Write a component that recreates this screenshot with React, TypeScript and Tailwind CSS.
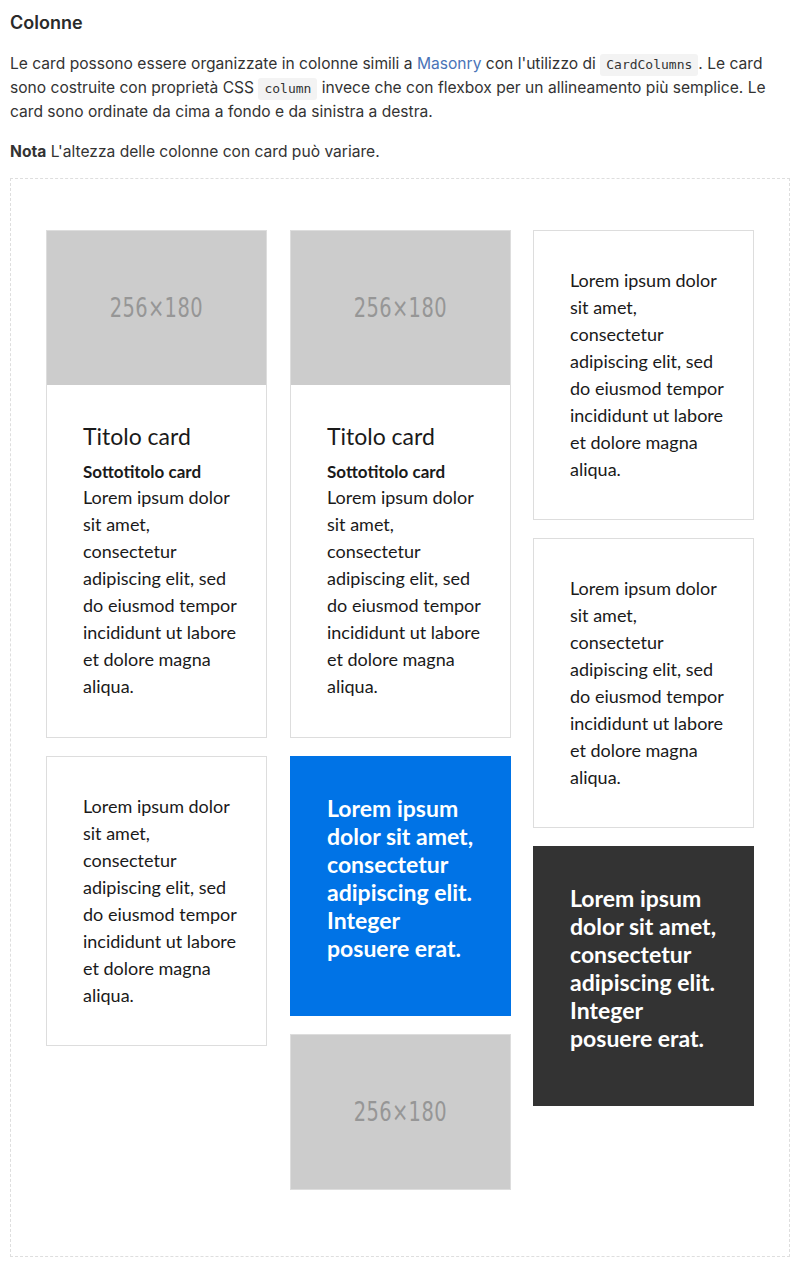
import React from "react";

const cardFont = { fontFamily: "Lato, 'Open Sans', sans-serif" };
const monoFont = { fontFamily: "'DejaVu Sans Mono', monospace" };

const loremLines = [
  "Lorem ipsum dolor",
  "sit amet,",
  "consectetur",
  "adipiscing elit, sed",
  "do eiusmod tempor",
  "incididunt ut labore",
  "et dolore magna",
  "aliqua.",
];

const quoteLines = [
  "Lorem ipsum",
  "dolor sit amet,",
  "consectetur",
  "adipiscing elit.",
  "Integer",
  "posuere erat.",
];

const Placeholder = () => (
  <div className="h-[154px] bg-[#cccccc] flex items-center justify-center">
    <span
      className="text-[27px] text-[#969696] tracking-[0.5px] scale-x-[0.8]"
      style={{ fontFamily: "'DejaVu Sans Condensed', 'Liberation Sans Narrow', sans-serif" }}
    >
      256×180
    </span>
  </div>
);

const Lines = ({ lines }: { lines: string[] }) => (
  <p className="whitespace-nowrap">
    {lines.map((l, i) => (
      <span key={i} className="block">
        {l}
      </span>
    ))}
  </p>
);

const TextCard = () => (
  <div className="border border-[#dddddd] bg-white px-[36px] py-[36px] text-[18px] leading-[27px] text-[#1a1a1a]">
    <Lines lines={loremLines} />
  </div>
);

const ImageCard = () => (
  <div className="border border-[#dddddd] bg-white text-[#1a1a1a]">
    <Placeholder />
    <div className="px-[36px] pt-[36px] pb-[37px]">
      <h5 className="text-[23px] leading-[30px] mb-[9px]">Titolo card</h5>
      <h6 className="text-[17px] leading-[24px] font-bold">Sottotitolo card</h6>
      <div className="text-[18px] leading-[27px]">
        <Lines lines={loremLines} />
      </div>
    </div>
  </div>
);

const QuoteCard = ({ bg }: { bg: string }) => (
  <div className={`${bg} pl-[37px] pr-[20px] pt-[38px] pb-[54px] text-white text-[23px] leading-[28px] font-bold`}>
    <Lines lines={quoteLines} />
  </div>
);

const Code = ({ children }: { children: React.ReactNode }) => (
  <code
    className="inline-block bg-[#f3f3f3] rounded-[3px] px-[6px] py-[2px] text-[13px] leading-[18px] text-[#333333]"
    style={monoFont}
  >
    {children}
  </code>
);

export default function App() {
  return (
    <div className="bg-white min-h-[1285px] px-[10px] pt-[9px] text-[#333333]" style={{ fontFamily: "Inter, 'Liberation Sans', sans-serif" }}>
      <h3 className="text-[18px] leading-[28px] font-semibold text-[#2a2a2a]">Colonne</h3>
      <p className="mt-[15px] text-[15.6px] leading-[24px]">
        Le card possono essere organizzate in colonne simili a{" "}
        <a className="text-[#4a74b8]">Masonry</a> con l'utilizzo di <Code>CardColumns</Code>. Le card sono costruite con
        proprietà CSS <Code>column</Code> invece che con flexbox per un allineamento più semplice. Le card sono ordinate da
        cima a fondo e da sinistra a destra.
      </p>
      <p className="mt-[16px] text-[15.6px] leading-[24px]">
        <strong className="font-bold">Nota</strong> L'altezza delle colonne con card può variare.
      </p>

      <div className="mt-[14px] border border-dashed border-[#dedede] h-[1079px] pl-[35px] pt-[51px]" style={cardFont}>
        <div className="flex items-start">
          <div className="w-[221px] flex flex-col gap-[18px]">
            <ImageCard />
            <TextCard />
          </div>
          <div className="w-[221px] ml-[23px] flex flex-col gap-[18px]">
            <ImageCard />
            <QuoteCard bg="bg-[#0073e6]" />
            <div className="border border-[#dddddd]">
              <Placeholder />
            </div>
          </div>
          <div className="w-[221px] ml-[22px] flex flex-col gap-[18px]">
            <TextCard />
            <TextCard />
            <QuoteCard bg="bg-[#333333]" />
          </div>
        </div>
      </div>
    </div>
  );
}
